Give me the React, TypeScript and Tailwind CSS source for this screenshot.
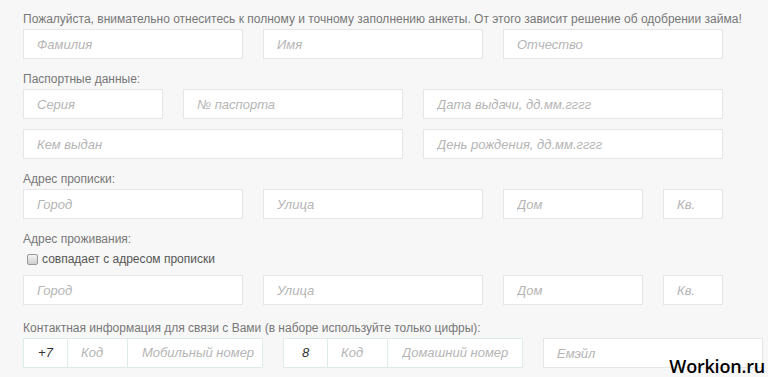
import { type ReactNode } from "react";

const font = { fontFamily: '"Liberation Sans", Arial, sans-serif' };

interface FieldProps {
  placeholder: string;
  className?: string;
}

const Field = ({ placeholder, className = "" }: FieldProps) => (
  <input
    className={`h-[30px] border border-[#e6e6e6] bg-white px-[13px] text-[13px] italic text-[#333] outline-none placeholder:text-[#b5b5b5] ${className}`}
    placeholder={placeholder}
    readOnly
    type="text"
  />
);

const Label = ({ children, className = "" }: { children: ReactNode; className?: string }) => (
  <div className={`h-[20px] text-[12px] leading-[20px] text-[#777] ${className}`}>{children}</div>
);

const Row = ({ children }: { children: ReactNode }) => (
  <div className="flex gap-[20px]">{children}</div>
);

const PhoneGroup = ({ prefix, last }: { prefix: string; last: string }) => (
  <div className="flex h-[30px] w-[240px] border border-[#dfeaea] bg-white text-[13px] italic">
    <input
      className="w-[44px] border-r border-[#dfeaea] bg-white text-center text-[#333] outline-none"
      defaultValue={prefix}
      readOnly
    />
    <input
      className="w-[60px] border-r border-[#dfeaea] bg-white px-[13px] outline-none placeholder:text-[#b5b5b5]"
      placeholder="Код"
      readOnly
    />
    <input
      className="min-w-0 flex-1 bg-white pl-[14px] pr-[2px] outline-none placeholder:text-[#b5b5b5]"
      placeholder={last}
      readOnly
    />
  </div>
);

export default function App() {
  return (
    <div className="relative h-[377px] w-[768px] overflow-hidden bg-[#f7f7f7] pl-[23px] pt-[9px]" style={font}>
      <Label className="whitespace-nowrap">
        Пожалуйста, внимательно отнеситесь к полному и точному заполнению анкеты. От этого зависит решение об одобрении займа!
      </Label>
      <Row>
        <Field className="w-[220px]" placeholder="Фамилия" />
        <Field className="w-[220px]" placeholder="Имя" />
        <Field className="w-[220px]" placeholder="Отчество" />
      </Row>

      <Label className="mt-[10px]">Паспортные данные:</Label>
      <Row>
        <Field className="w-[140px]" placeholder="Серия" />
        <Field className="w-[220px]" placeholder="№ паспорта" />
        <Field className="w-[300px]" placeholder="Дата выдачи, дд.мм.гггг" />
      </Row>
      <div className="mt-[10px]">
        <Row>
          <Field className="w-[380px]" placeholder="Кем выдан" />
          <Field className="w-[300px]" placeholder="День рождения, дд.мм.гггг" />
        </Row>
      </div>

      <Label className="mt-[10px]">Адрес прописки:</Label>
      <Row>
        <Field className="w-[220px]" placeholder="Город" />
        <Field className="w-[220px]" placeholder="Улица" />
        <Field className="w-[140px]" placeholder="Дом" />
        <Field className="w-[60px]" placeholder="Кв." />
      </Row>

      <Label className="mt-[10px]">Адрес проживания:</Label>
      <label className="flex h-[20px] items-center gap-[4px] pl-[4px] text-[12px] text-[#555]">
        <span className="size-[11px] rounded-[2px] border border-[#9a9a9a] bg-gradient-to-b from-[#f4f4f4] to-[#cfcfcf]" />
        совпадает с адресом прописки
      </label>
      <div className="mt-[6px]">
        <Row>
          <Field className="w-[220px]" placeholder="Город" />
          <Field className="w-[220px]" placeholder="Улица" />
          <Field className="w-[140px]" placeholder="Дом" />
          <Field className="w-[60px]" placeholder="Кв." />
        </Row>
      </div>

      <Label className="mt-[13px]">
        Контактная информация для связи с Вами (в наборе используйте только цифры):
      </Label>
      <Row>
        <PhoneGroup last="Мобильный номер" prefix="+7" />
        <PhoneGroup last="Домашний номер" prefix="8" />
        <Field className="w-[220px]" placeholder="Емэйл" />
      </Row>

      <div
        className="absolute bottom-[-3px] right-[3px] text-[18px] font-semibold tracking-[-0.2px] text-black"
        style={{ fontFamily: '"Open Sans", sans-serif' }}
      >
        Workion.ru
      </div>
    </div>
  );
}
